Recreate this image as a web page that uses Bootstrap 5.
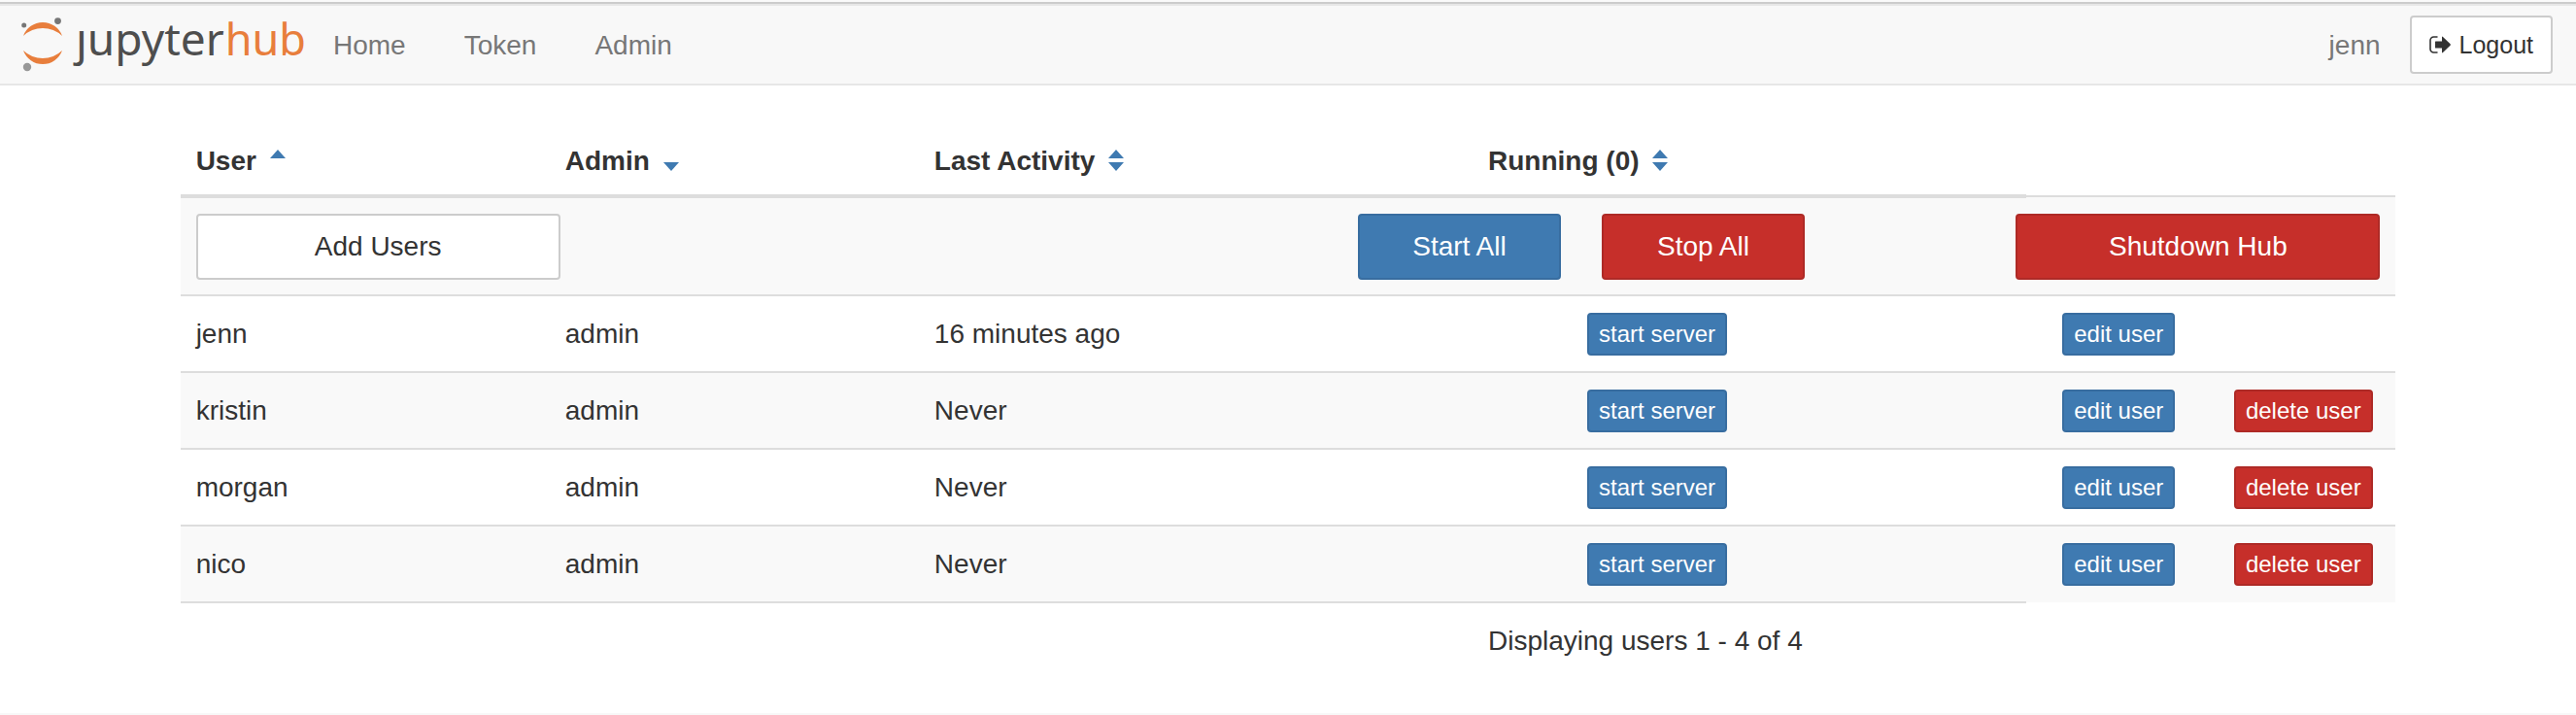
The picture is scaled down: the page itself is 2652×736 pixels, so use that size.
<!DOCTYPE html>
<html lang="en">
<head>
<meta charset="utf-8">
<meta name="viewport" content="width=device-width, initial-scale=1">
<title>JupyterHub</title>
<link href="https://cdn.jsdelivr.net/npm/bootstrap@5.3.0/dist/css/bootstrap.min.css" rel="stylesheet">
<style>
  body {
    font-family: "Liberation Sans", Arial, sans-serif;
    font-size: 28px;
    line-height: 40px;
    color: #333;
    background: #fff;
  }
  .btn {
    --bs-btn-font-size: 28px;
    --bs-btn-line-height: 40px;
    --bs-btn-border-width: 2px;
    --bs-btn-border-radius: 4px;
    --bs-btn-padding-x: 24px;
    --bs-btn-padding-y: 12px;
  }
  .btn-primary { --bs-btn-bg: #3f7ab1; --bs-btn-border-color: #386da0; }
  .btn-danger { --bs-btn-bg: #c62f2a; --bs-btn-border-color: #ae2a26; }
  .btn-plain {
    --bs-btn-color: #333;
    --bs-btn-bg: #fff;
    --bs-btn-border-color: #ccc;
    --bs-btn-hover-bg: #e6e6e6;
  }
  .btn-row {
    --bs-btn-font-size: 24px;
    --bs-btn-line-height: 36px;
    --bs-btn-padding-x: 10px;
    --bs-btn-padding-y: 2px;
  }
  .btn-logout {
    --bs-btn-font-size: 25px;
    --bs-btn-line-height: 36px;
    --bs-btn-padding-x: 18px;
    --bs-btn-padding-y: 10px;
  }

  .window-edge { height: 4px; background: #fafafa; border-bottom: 2px solid #ccc; }
  .hub-bar {
    background: #f8f8f8;
    border-top: 2px solid #e7e7e7;
    border-bottom: 2px solid #e7e7e7;
    padding: 10px 24px 10px 20px;
  }
  .hub-bar .navbar-nav .nav-link { color: #777; padding: 11px 30px 9px; }
  .wordmark {
    font-family: "Noto Sans", sans-serif;
    font-size: 46px;
    line-height: 44px;
    padding-bottom: 14px;
    color: #4e4e4e;
  }
  .wordmark .hub-part { color: #e87e3c; font-size: 45px; margin-left: 1px; }
  .hub-bar .navbar-brand { padding: 0; margin: 0 -2px 0 0; gap: 12px; }

  .hub-main { width: 86%; margin: 54px auto 0; }
  .table.user-table { table-layout: fixed; color: #333; margin: 0; border-collapse: collapse; }
  .table.user-table tr > * { padding: 0 16px; border: 0; color: #333; background: none; }
  .table.user-table thead th { height: 60px; padding-bottom: 14px; vertical-align: bottom; border-bottom: 4px solid #ddd; }
  .table.user-table tbody td { border-top: 2px solid #ddd; height: 79px; vertical-align: middle; }
  .table.user-table tbody tr:nth-child(odd) td { background: #f9f9f9; }
  .table.user-table tbody .bulk-row td { height: 102px; }
  .table.user-table tfoot td { border-top: 2px solid #ddd; padding-top: 19px; padding-bottom: 16px; }
  .table.user-table tfoot td.bare { border-top: 0; }
  .w-wide { width: 375px; }
  .w-half { width: 209px; }
  .server-bulk { gap: 42px; margin-left: 56px; }
  .sort { color: #3f7ab1; margin-left: 6px; }
  .sort svg { vertical-align: -1px; }
  .page-end { height: 2px; background: #f8f8f8; }
</style>
</head>
<body class="d-flex flex-column min-vh-100">
<div class="window-edge"></div>
<nav class="navbar navbar-expand hub-bar">
  <a class="navbar-brand d-flex align-items-center" href="#" aria-label="jupyterhub">
    <svg width="46" height="60" viewBox="20 16 46 60" aria-hidden="true">
      <g fill="#e87e3c">
        <path d="M24 37A21.3 21.3 0 0 1 64 37A29 29 0 0 0 24 37Z"/>
        <path d="M24 52A21.3 21.3 0 0 0 64 52A29 29 0 0 1 24 52Z"/>
      </g>
      <circle cx="24.7" cy="26" r="2.5" fill="#767676"/>
      <circle cx="59.5" cy="21.6" r="3.4" fill="#767676"/>
      <circle cx="28" cy="69" r="4.2" fill="#989898"/>
    </svg>
    <span class="wordmark">ȷupyter<span class="hub-part">hub</span></span>
  </a>
  <ul class="navbar-nav flex-grow-1">
    <li class="nav-item"><a class="nav-link" href="#">Home</a></li>
    <li class="nav-item"><a class="nav-link" href="#">Token</a></li>
    <li class="nav-item"><a class="nav-link" href="#">Admin</a></li>
    <li class="nav-item ms-auto"><a class="nav-link" href="#">jenn</a></li>
  </ul>
  <button class="btn btn-plain btn-logout d-flex align-items-center gap-2" type="button">
    <svg width="23" height="18" viewBox="0 0 23 18" aria-hidden="true">
      <path d="M8.500 1H4.500A3.500 3.500 0 0 0 1 4.500V13.500A3.500 3.500 0 0 0 4.500 17H8.500" fill="none" stroke="#333" stroke-width="1.600"/>
      <path d="M6.500 5.500H13V1.200Q13 .2 14 .9L21.600 8.300Q22.200 9 21.600 9.700L14 17.100Q13 17.800 13 16.800V12.500H6.500Q6 12.500 6 12V6Q6 5.500 6.500 5.500Z" fill="#333"/>
    </svg>
    Logout
  </button>
</nav>

<main class="hub-main">
  <table class="table user-table">
    <colgroup>
      <col style="width:16.6667%"><col style="width:16.6667%"><col style="width:16.6667%">
      <col style="width:8.3333%"><col style="width:25%">
      <col style="width:8.3333%"><col style="width:8.3333%">
    </colgroup>
    <thead>
      <tr>
        <th>User <a class="sort" href="#" aria-label="Sort by user"><svg width="16" height="22" fill="currentColor"><path d="M0 9L8 0L16 9Z"/></svg></a></th>
        <th>Admin <a class="sort" href="#" aria-label="Sort by admin"><svg width="16" height="22" fill="currentColor"><path d="M0 13L8 22L16 13Z"/></svg></a></th>
        <th colspan="2">Last Activity <a class="sort" href="#" aria-label="Sort by last activity"><svg width="16" height="22" fill="currentColor"><path d="M0 9L8 0L16 9ZM0 13L8 22L16 13Z"/></svg></a></th>
        <th>Running (0) <a class="sort" href="#" aria-label="Sort by running"><svg width="16" height="22" fill="currentColor"><path d="M0 9L8 0L16 9ZM0 13L8 22L16 13Z"/></svg></a></th>
      </tr>
    </thead>
    <tbody>
      <tr class="bulk-row">
        <td colspan="3"><button class="btn btn-plain w-wide" type="button">Add Users</button></td>
        <td colspan="4">
          <div class="d-flex justify-content-between">
            <div class="d-flex server-bulk">
              <button class="btn btn-primary w-half" type="button">Start All</button>
              <button class="btn btn-danger w-half" type="button">Stop All</button>
            </div>
            <button class="btn btn-danger w-wide" type="button">Shutdown Hub</button>
          </div>
        </td>
      </tr>
      <tr>
        <td>jenn</td><td>admin</td><td>16 minutes ago</td>
        <td colspan="2" class="text-center"><button class="btn btn-primary btn-row" type="button">start server</button></td>
        <td class="text-center"><button class="btn btn-primary btn-row" type="button">edit user</button></td>
        <td></td>
      </tr>
      <tr>
        <td>kristin</td><td>admin</td><td>Never</td>
        <td colspan="2" class="text-center"><button class="btn btn-primary btn-row" type="button">start server</button></td>
        <td class="text-center"><button class="btn btn-primary btn-row" type="button">edit user</button></td>
        <td class="text-center"><button class="btn btn-danger btn-row" type="button">delete user</button></td>
      </tr>
      <tr>
        <td>morgan</td><td>admin</td><td>Never</td>
        <td colspan="2" class="text-center"><button class="btn btn-primary btn-row" type="button">start server</button></td>
        <td class="text-center"><button class="btn btn-primary btn-row" type="button">edit user</button></td>
        <td class="text-center"><button class="btn btn-danger btn-row" type="button">delete user</button></td>
      </tr>
      <tr>
        <td>nico</td><td>admin</td><td>Never</td>
        <td colspan="2" class="text-center"><button class="btn btn-primary btn-row" type="button">start server</button></td>
        <td class="text-center"><button class="btn btn-primary btn-row" type="button">edit user</button></td>
        <td class="text-center"><button class="btn btn-danger btn-row" type="button">delete user</button></td>
      </tr>
    </tbody>
    <tfoot>
      <tr>
        <td colspan="4"></td>
        <td>Displaying users 1 - 4 of 4</td>
        <td colspan="2" class="bare"></td>
      </tr>
    </tfoot>
  </table>
</main>
<footer class="page-end mt-auto"></footer>
<script src="https://cdn.jsdelivr.net/npm/bootstrap@5.3.0/dist/js/bootstrap.bundle.min.js"></script>
</body>
</html>
